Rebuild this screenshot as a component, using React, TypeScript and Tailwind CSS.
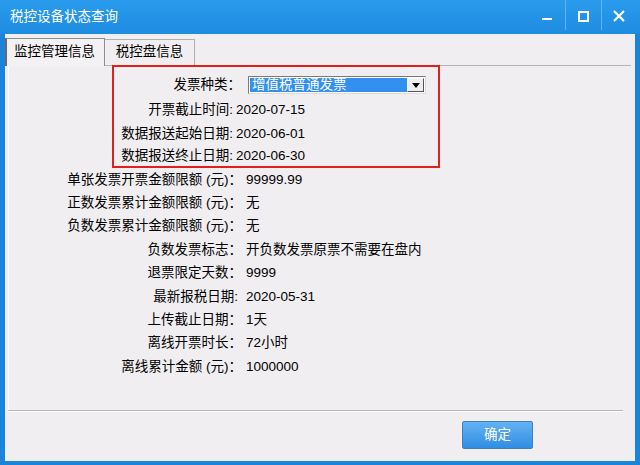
import React from 'react'

const FONT = { fontFamily: '"Liberation Sans", "Noto Sans CJK SC", sans-serif' }

const boxRows = [
  { label: '开票截止时间:', value: '2020-07-15', h: 'h-[24px]' },
  { label: '数据报送起始日期:', value: '2020-06-01', h: 'h-[24px]' },
  { label: '数据报送终止日期:', value: '2020-06-30', h: 'h-[20px]' },
]

const rows = [
  { label: '单张发票开票金额限额 (元)：', value: '99999.99' },
  { label: '正数发票累计金额限额 (元)：', value: '无' },
  { label: '负数发票累计金额限额 (元)：', value: '无' },
  { label: '负数发票标志：', value: '开负数发票原票不需要在盘内' },
  { label: '退票限定天数：', value: '9999' },
  { label: '最新报税日期:', value: '2020-05-31' },
  { label: '上传截止日期：', value: '1天' },
  { label: '离线开票时长：', value: '72小时' },
  { label: '离线累计金额 (元)：', value: '1000000' },
]

const WindowControls = () => (
  <div className="flex items-stretch h-[30px] self-start">
    <div className="w-[36px] flex items-center justify-center">
      <div className="w-[10px] h-[2px] bg-white mt-[8px]" />
    </div>
    <div className="w-px bg-[#5fb3f0]" />
    <div className="w-[35px] flex items-center justify-center">
      <div className="w-[11px] h-[11px] border-2 border-white mt-[2px]" />
    </div>
    <div className="w-px bg-[#5fb3f0]" />
    <div className="w-[33px] flex items-center justify-center">
      <svg width="12" height="12" viewBox="0 0 12 12" className="mt-[2px]">
        <path d="M1 1 L11 11 M11 1 L1 11" stroke="white" strokeWidth="2.2" />
      </svg>
    </div>
  </div>
)

export default function App() {
  return (
    <div className="w-[640px] h-[465px] bg-[#1a84da] flex flex-col overflow-hidden" style={FONT}>
      <div className="h-[34px] shrink-0 flex items-center justify-between pl-[10px] pr-[5px] bg-gradient-to-b from-[#2a9bec] to-[#1d8ce2]">
        <span className="text-white text-[13.5px] leading-none">税控设备状态查询</span>
        <WindowControls />
      </div>

      <div className="flex-1 mx-[5px] mb-[4px] bg-[#f0eef0] flex flex-col text-[13.5px] text-black">
        {/* tabs */}
        <div className="h-[31px] shrink-0 flex items-end">
          <div className="h-[28px] w-[100px] border-l-2 border-t border-r border-[#8c8c8c] border-l-[#6a6a6a] bg-[#f3f1f3] flex items-center justify-center pr-[2px] relative z-10 -mb-px">
            监控管理信息
          </div>
          <div className="h-[26px] w-[90px] border-r border-t border-[#b0b0b0] flex items-center justify-center">
            税控盘信息
          </div>
        </div>

        {/* panel */}
        <div className="h-[345px] shrink-0 ml-[3px] mr-[4px] border-t border-l border-[#b4b4b4] border-l-[#fbfbfb] flex flex-col">
          <div className="ml-[103px] w-[328px] border-2 border-[#e0201c] pt-[5px] -mt-px flex flex-col">
            <div className="h-[26px] flex items-center">
              <div className="w-[127px] text-right whitespace-nowrap">发票种类：</div>
              <div className="ml-[7px] w-[178px] h-[18px] border border-[#7a7a7a] border-r-[#dcdcdc] border-b-[#dcdcdc] bg-white flex p-px">
                <div className="flex-1 bg-[#3390f0] text-white text-[13.5px] leading-[14px] pl-[2px] flex items-center">
                  增值税普通发票
                </div>
                <div className="w-[17px] border border-[#fafafa] border-r-[#555] border-b-[#555] bg-[#eeeeee] flex items-center justify-center">
                  <svg width="8" height="5" viewBox="0 0 8 5">
                    <path d="M0 0 H8 L4 5 Z" fill="black" />
                  </svg>
                </div>
              </div>
            </div>
            {boxRows.map((r) => (
              <div key={r.label} className={`${r.h} flex items-center`}>
                <div className="w-[119px] text-right whitespace-nowrap">{r.label}</div>
                <div className="ml-[3px]">{r.value}</div>
              </div>
            ))}
          </div>

          <div className="flex flex-col">
            {rows.map((r) => (
              <div key={r.label} className="h-[23.4px] flex items-center">
                <div className={`w-[233px] text-right whitespace-nowrap ${r.label.endsWith(':') ? 'pr-[4px]' : ''}`}>
                  {r.label}
                </div>
                <div className="ml-[4px] whitespace-nowrap">{r.value}</div>
              </div>
            ))}
          </div>
        </div>

        {/* separator */}
        <div className="ml-[3px] mr-[12px] h-[2px] border-t border-[#b8b6b8] border-b border-b-white" />

        <div className="flex-1 flex items-start justify-end pr-[102px] pt-[9px]">
          <button className="w-[71px] h-[28px] rounded-[2px] border border-[#3c7fc4] bg-gradient-to-b from-[#63b2f2] to-[#2e8ee2] text-white text-[13.5px] flex items-center justify-center">
            确定
          </button>
        </div>
      </div>
    </div>
  )
}
